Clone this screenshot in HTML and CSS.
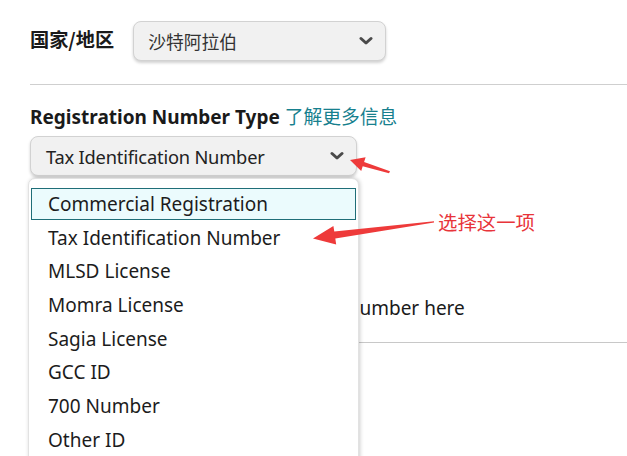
FILE: index.html
```html
<!DOCTYPE html>
<html lang="zh">
<head>
<meta charset="utf-8">
<link rel="stylesheet" href="styles.css">
</head>
<body>
<div class="page">
  <div class="row-country">
    <span class="label-cn">国家/地区</span>
    <div class="select select-country">
      <span class="select-text">沙特阿拉伯</span>
      <svg class="chev" width="14" height="10" viewBox="0 0 14 10"><path d="M2 2.5 L7 7 L12 2.5" fill="none" stroke="#4a4a4a" stroke-width="3" stroke-linecap="round" stroke-linejoin="round"/></svg>
    </div>
  </div>
  <div class="divider"></div>
  <div class="field-title">Registration Number Type <a class="learn">了解更多信息</a></div>
  <div class="select select-type">
    <span class="select-text">Tax Identification Number</span>
    <svg class="chev" width="14" height="10" viewBox="0 0 14 10"><path d="M2 2.5 L7 7 L12 2.5" fill="none" stroke="#4a4a4a" stroke-width="3" stroke-linecap="round" stroke-linejoin="round"/></svg>
  </div>
  <div class="hint">Enter the registration number here</div>
  <div class="divider divider-2"></div>
</div>

<ul class="dropdown">
  <li class="opt active">Commercial Registration</li>
  <li class="opt">Tax Identification Number</li>
  <li class="opt">MLSD License</li>
  <li class="opt">Momra License</li>
  <li class="opt">Sagia License</li>
  <li class="opt">GCC ID</li>
  <li class="opt">700 Number</li>
  <li class="opt">Other ID</li>
</ul>

<svg class="annot" width="627" height="456" viewBox="0 0 627 456">
  <polygon fill="#ee3a3a" points="390,171.2 364.1,161.9 365.6,157.2 350,160 361.2,171 362.7,166.3 389,173.2"/>
  <polygon fill="#ee3a3a" points="434,221.2 334.3,231.4 333.4,226 313,238.5 336.2,244.5 335.3,238.6 434,222.6"/>
</svg>
<div class="annot-text">选择这一项</div>
</body>
</html>
```
FILE: styles.css
```css
html, body {
  margin: 0;
  padding: 0;
  background: #ffffff;
}
body {
  width: 627px;
  height: 456px;
  overflow: hidden;
  position: relative;
  font-family: "Noto Sans", "Noto Sans CJK SC", sans-serif;
  color: #1f1f1f;
}
.page {
  padding: 21px 0 0 30px;
}
.row-country {
  display: flex;
  align-items: center;
  gap: 19px;
  height: 40px;
}
.label-cn {
  font-family: "Noto Sans CJK SC", sans-serif;
  font-weight: 700;
  font-size: 19.2px;
  color: #1a1a1a;
  margin-top: -4px;
}
.select {
  box-sizing: border-box;
  display: flex;
  align-items: center;
  justify-content: space-between;
  background: #f1f1f1;
  border: 1px solid #d2d2d2;
  border-radius: 8px;
  box-shadow: 0 2px 3px rgba(0,0,0,0.18);
  height: 40px;
}
.select-country {
  width: 253px;
  padding: 0 12px 0 14px;
}
.select-country .select-text {
  font-family: "Noto Sans CJK SC", sans-serif;
  font-size: 17.8px;
  color: #333;
}
.select-type {
  width: 327px;
  margin-top: 6px;
  padding: 0 12px 0 15px;
}
.select-type .select-text {
  font-size: 18.3px;
  color: #222;
  letter-spacing: -0.2px;
}
.chev {
  display: block;
}
.divider {
  margin-top: 23px;
  border-top: 1px solid #cfcfcf;
}
.field-title {
  margin-top: 18px;
  font-size: 19px;
  font-weight: 700;
  color: #1a1a1a;
  line-height: 26px;
}
.learn {
  font-family: "Noto Sans CJK SC", sans-serif;
  font-weight: 400;
  font-size: 18.8px;
  color: #17808e;
}
.hint {
  margin-top: 119px;
  padding-left: 122px;
  font-size: 19px;
  line-height: 26px;
  color: #1a1a1a;
}
.divider-2 {
  margin-top: 21px;
  border-top-color: #c8c8c8;
}
.dropdown {
  position: absolute;
  left: 28px;
  top: 178px;
  width: 331px;
  height: 300px;
  margin: 0;
  padding: 9px 2px 0 2px;
  box-sizing: border-box;
  list-style: none;
  background: #ffffff;
  border: 1px solid #e2e2e2;
  border-radius: 7px 7px 0 0;
  box-shadow: 1px 0 4px rgba(0,0,0,0.2);
}
.opt {
  box-sizing: border-box;
  height: 33.7px;
  line-height: 31.7px;
  padding-left: 16px;
  font-size: 19px;
  color: #1c1c1c;
  border: 1px solid transparent;
}
.opt.active {
  background: #ebfbfd;
  border-color: #1f6e78;
  height: 32px;
  line-height: 30px;
  margin-bottom: 1.7px;
}
.annot {
  position: absolute;
  left: 0;
  top: 0;
  pointer-events: none;
}
.annot-text {
  position: absolute;
  left: 438px;
  top: 208px;
  font-family: "Noto Sans CJK SC", sans-serif;
  font-size: 19.4px;
  line-height: 28px;
  color: #e8343a;
}
```
